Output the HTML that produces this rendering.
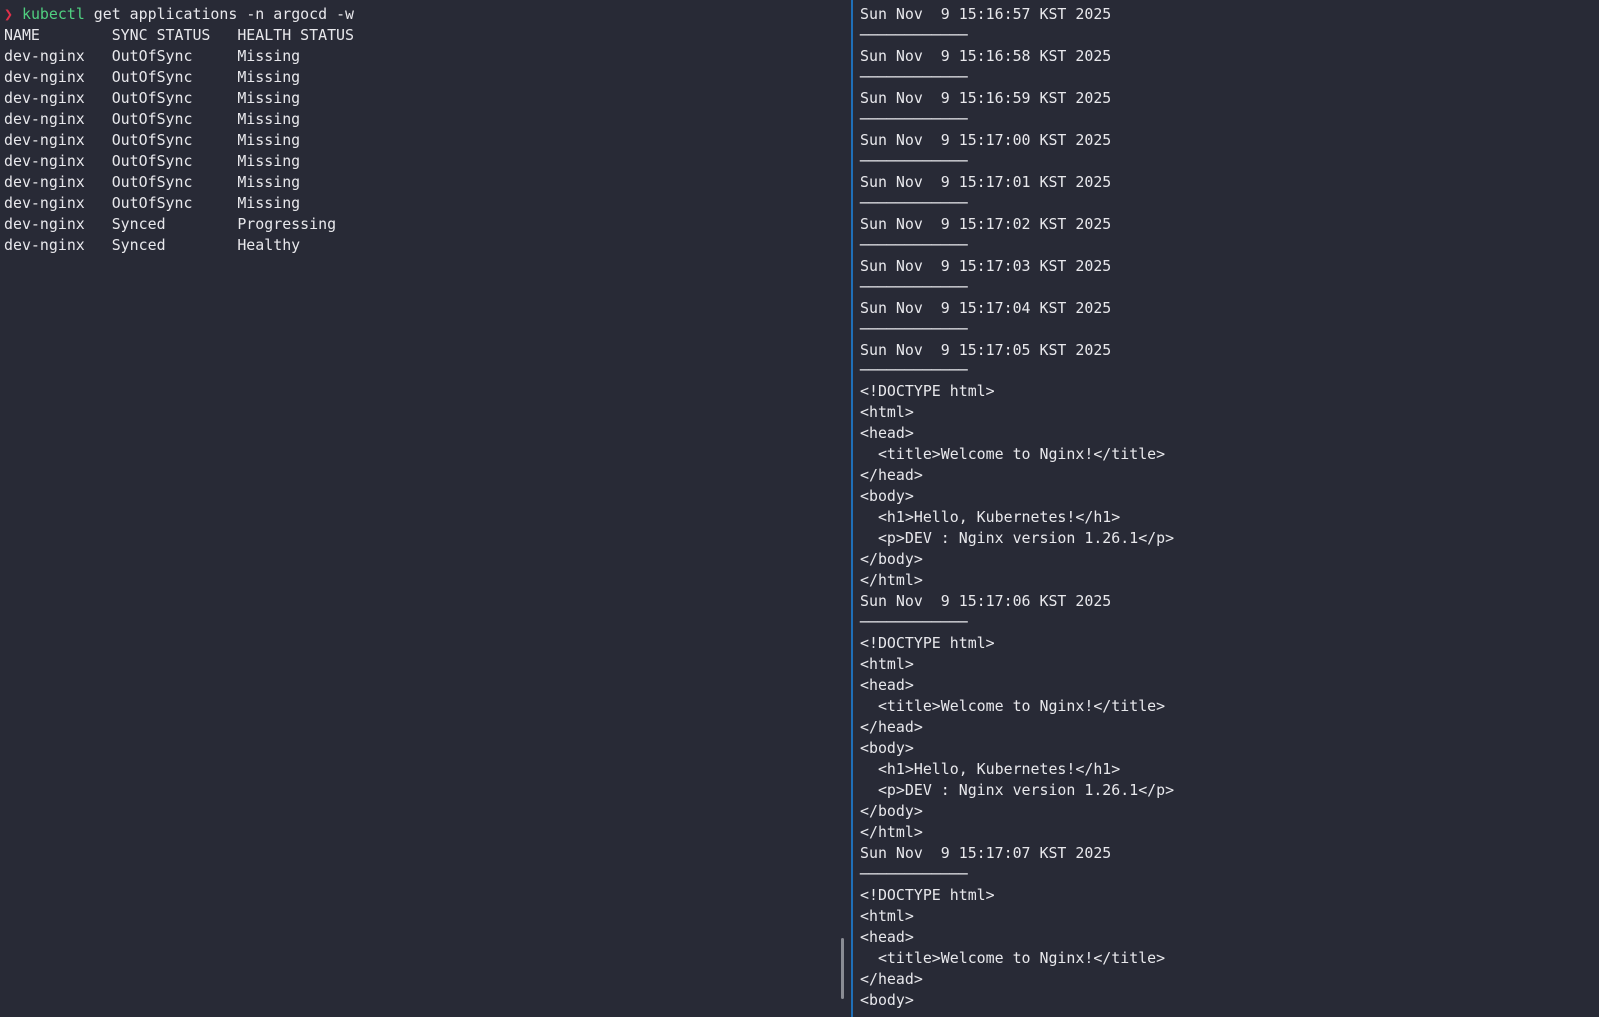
<!DOCTYPE html>
<html><head><style>
body{margin:0;width:1599px;height:1017px;background:#282a36;overflow:hidden;position:relative}
pre{margin:0;position:absolute;top:4px;font-family:"DejaVu Sans Mono","Liberation Mono",monospace;font-size:14.92px;line-height:20.97px;color:#e8e8ec;white-space:pre}
#l{left:4px}#r{left:860px}
.div{position:absolute;left:851px;top:0;width:2px;height:1017px;background:#1f6fb8}
.sb{position:absolute;left:841px;top:938px;width:3px;height:61px;background:#8a8c94;border-radius:2px}
.red{color:#e0304a}.grn{color:#50d080}
</style></head><body>
<pre id="l"><span class="red">❯</span> <span class="grn">kubectl</span> get applications -n argocd -w
NAME        SYNC STATUS   HEALTH STATUS
dev-nginx   OutOfSync     Missing
dev-nginx   OutOfSync     Missing
dev-nginx   OutOfSync     Missing
dev-nginx   OutOfSync     Missing
dev-nginx   OutOfSync     Missing
dev-nginx   OutOfSync     Missing
dev-nginx   OutOfSync     Missing
dev-nginx   OutOfSync     Missing
dev-nginx   Synced        Progressing
dev-nginx   Synced        Healthy</pre>
<div class="div"></div><div class="sb"></div>
<pre id="r">Sun Nov  9 15:16:57 KST 2025
────────────
Sun Nov  9 15:16:58 KST 2025
────────────
Sun Nov  9 15:16:59 KST 2025
────────────
Sun Nov  9 15:17:00 KST 2025
────────────
Sun Nov  9 15:17:01 KST 2025
────────────
Sun Nov  9 15:17:02 KST 2025
────────────
Sun Nov  9 15:17:03 KST 2025
────────────
Sun Nov  9 15:17:04 KST 2025
────────────
Sun Nov  9 15:17:05 KST 2025
────────────
&lt;!DOCTYPE html&gt;
&lt;html&gt;
&lt;head&gt;
  &lt;title&gt;Welcome to Nginx!&lt;/title&gt;
&lt;/head&gt;
&lt;body&gt;
  &lt;h1&gt;Hello, Kubernetes!&lt;/h1&gt;
  &lt;p&gt;DEV : Nginx version 1.26.1&lt;/p&gt;
&lt;/body&gt;
&lt;/html&gt;
Sun Nov  9 15:17:06 KST 2025
────────────
&lt;!DOCTYPE html&gt;
&lt;html&gt;
&lt;head&gt;
  &lt;title&gt;Welcome to Nginx!&lt;/title&gt;
&lt;/head&gt;
&lt;body&gt;
  &lt;h1&gt;Hello, Kubernetes!&lt;/h1&gt;
  &lt;p&gt;DEV : Nginx version 1.26.1&lt;/p&gt;
&lt;/body&gt;
&lt;/html&gt;
Sun Nov  9 15:17:07 KST 2025
────────────
&lt;!DOCTYPE html&gt;
&lt;html&gt;
&lt;head&gt;
  &lt;title&gt;Welcome to Nginx!&lt;/title&gt;
&lt;/head&gt;
&lt;body&gt;</pre>
</body></html>
